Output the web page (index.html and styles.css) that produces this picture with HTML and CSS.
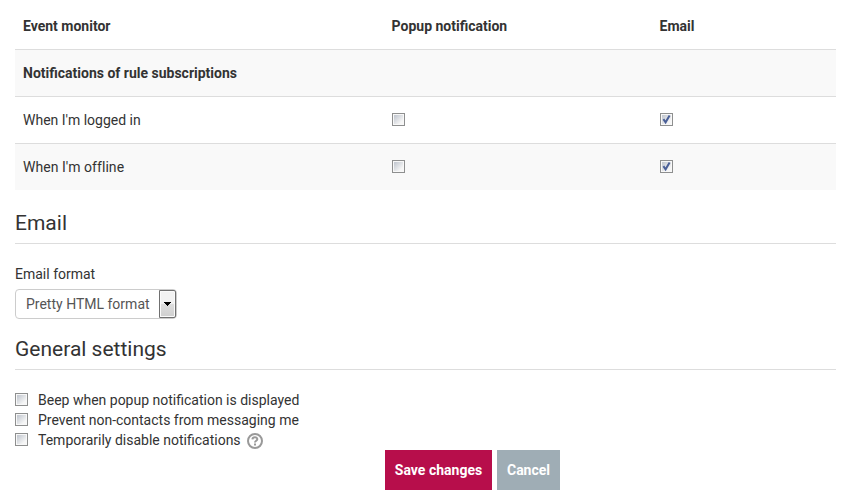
FILE: index.html
```
<!DOCTYPE html>
<html lang="en">
<head>
<meta charset="utf-8">
<title>Notification preferences</title>
<link rel="stylesheet" href="styles.css">
</head>
<body>
<svg class="defs" aria-hidden="true">
  <defs>
    <linearGradient id="box" x1="0" y1="0" x2="1" y2="1">
      <stop offset="0.1" stop-color="#c5cad2"/>
      <stop offset="0.8" stop-color="#f6f6f6"/>
    </linearGradient>
    <symbol id="unchecked" viewBox="0 0 13 13">
      <path fill="#8e8f8f" d="M0 0h13v13H0z"/>
      <path fill="#f8f8f8" d="M1 1h11v11H1z"/>
      <path fill="url(#box)" d="M2 2h9v9H2z"/>
    </symbol>
    <symbol id="checked" viewBox="0 0 13 13">
      <use href="#unchecked"/>
      <path fill="none" stroke="#4a5f97" stroke-width="2" d="M3.400 6.200L5.600 9.300L9.600 2.600"/>
    </symbol>
  </defs>
</svg>
<main>
  <table>
    <thead>
      <tr><th class="c1">Event monitor</th><th class="c2">Popup notification</th><th>Email</th></tr>
    </thead>
    <tbody>
      <tr class="odd"><th colspan="3">Notifications of rule subscriptions</th></tr>
      <tr><td>When I'm logged in</td><td><svg class="check"><use href="#unchecked"/></svg></td><td><svg class="check"><use href="#checked"/></svg></td></tr>
      <tr class="odd"><td class="wide">When I'm offline</td><td><svg class="check"><use href="#unchecked"/></svg></td><td><svg class="check"><use href="#checked"/></svg></td></tr>
    </tbody>
  </table>
  <h2>Email</h2>
  <div class="label">Email format</div>
  <div class="select">
    <span class="value">Pretty HTML format</span>
    <span class="arrow"><svg width="7" height="4" shape-rendering="crispEdges"><path d="M0 0h7v1H0zM1 1h5v1H1zM2 2h3v1H2zM3 3h1v1H3z"/></svg></span>
  </div>
  <h2 class="general">General settings</h2>
  <div class="options">
    <div class="option"><svg class="check"><use href="#unchecked"/></svg><span>Beep when popup notification is displayed</span></div>
    <div class="option"><svg class="check"><use href="#unchecked"/></svg><span>Prevent non-contacts from messaging me</span></div>
    <div class="option"><svg class="check"><use href="#unchecked"/></svg><span>Temporarily disable notifications</span>
      <svg class="help" viewBox="0 0 16 16"><circle cx="8" cy="8" r="7" fill="none" stroke="#999" stroke-width="2"/><path fill="none" stroke="#999" stroke-width="2" d="M5.400 6.400C5.600 3.600 10.400 3.700 10.300 6.200C10.200 7.800 8 7.700 8 9.600"/><path fill="#999" d="M7 10.500h2v2H7z"/></svg>
    </div>
  </div>
  <div class="actions"><button class="save">Save changes</button><button class="cancel">Cancel</button></div>
</main>
</body>
</html>
```

FILE: styles.css
```
body {
  margin: 0;
  background: #fff;
  color: #333;
  font: 14px/20px Roboto, "Liberation Sans", sans-serif;
}
main { padding: 3px 15px 0; }
.defs { position: absolute; width: 0; height: 0; }
table {
  width: 821px;
  table-layout: fixed;
  border-collapse: separate;
  border-spacing: 0;
}
th, td {
  box-sizing: border-box;
  height: 47px;
  padding: 0 8px;
  border-top: 1px solid #ddd;
  text-align: left;
  vertical-align: middle;
}
thead th { height: 46px; border-top: 0; }
thead th + th { padding-left: 7.600px; }
th { font-weight: 700; }
.c1 { width: 369px; }
.c2 { width: 268px; }
.wide { letter-spacing: 0.050px; }
.odd { background: #f9f9f9; }
.check { display: block; flex: none; width: 13px; height: 13px; }
td .check { margin-bottom: 1px; }
h2 {
  box-sizing: border-box;
  height: 54px;
  margin: 0;
  padding-top: 20px;
  border-bottom: 1px solid #ddd;
  font-size: 21px;
  font-weight: 400;
  line-height: 26px;
}
.label { margin-top: 20px; }
.select {
  box-sizing: border-box;
  display: flex;
  width: 162px;
  height: 30px;
  margin-top: 5px;
  border: 1px solid #ccc;
  border-radius: 4px;
  color: #555;
}
.value { width: 143px; padding-left: 10px; box-sizing: border-box; line-height: 28px; white-space: nowrap; }
.arrow {
  box-sizing: border-box;
  display: flex;
  align-items: center;
  justify-content: center;
  width: 17px;
  height: 28px;
  border: 1px solid #707070;
  border-radius: 0 2px 2px 0;
  background: linear-gradient(#f2f2f2 0 48%, #dedede 50%, #cfcfcf);
  box-shadow: inset 0 0 0 1px #fafafa;
}
h2.general { height: 51px; padding-top: 17px; }
.options { margin-top: 20px; }
.option { display: flex; height: 20px; align-items: center; }
.option .check { margin: 0 10px 1px 0; }
.help { width: 16px; height: 16px; margin: 2px 0 0 6px; }
.actions { display: flex; gap: 5px; padding-left: 370px; }
button {
  height: 40px;
  padding: 0;
  border: 0;
  color: #fff;
  font: 700 14px/20px Roboto, "Liberation Sans", sans-serif;
}
.save { width: 107px; background: #b70e4b; }
.cancel { width: 63px; background: #9fadb5; }
```
